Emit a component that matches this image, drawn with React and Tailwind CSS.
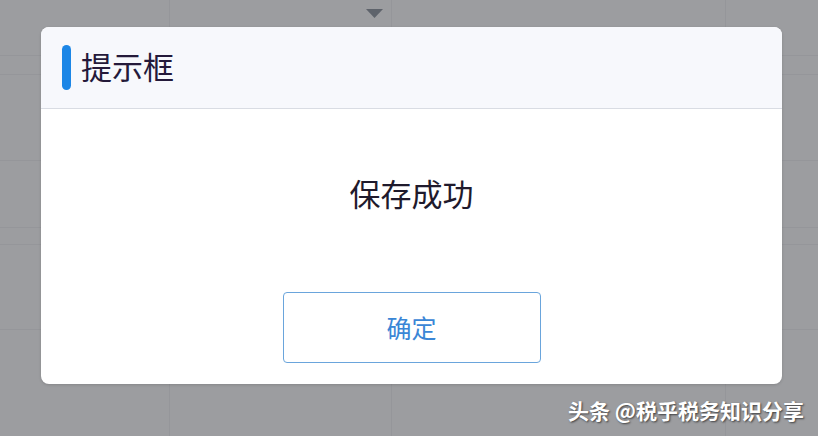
import React from "react";

const rows = [56, 19, 86, 67, 17, 85, 106];

function Backdrop() {
  return (
    <div className="flex flex-col w-full h-full">
      {rows.map((h, i) => (
        <div
          key={i}
          className="flex border-b border-[#95969a] last:border-b-0"
          style={{ height: h }}
        >
          <div className="w-[170px] border-r border-[#95969a]" />
          <div className="w-[222px] border-r border-[#95969a] flex justify-end items-start pr-[8px] pt-[9px]">
            {i === 0 && (
              <svg width="17" height="9" viewBox="0 0 17 9">
                <path d="M0 0 L17 0 L8.5 9 Z" fill="#5e636b" />
              </svg>
            )}
          </div>
          <div className="w-[334px] border-r border-[#95969a]" />
          <div className="flex-1" />
        </div>
      ))}
    </div>
  );
}

export default function App() {
  return (
    <div
      className="relative w-[818px] h-[436px] overflow-hidden bg-[#9c9da0]"
      style={{ fontFamily: '"Noto Sans CJK SC", "Noto Sans", sans-serif' }}
    >
      <Backdrop />

      <div className="absolute left-[41px] top-[27px] w-[741px] h-[357px] rounded-[8px] bg-white overflow-hidden flex flex-col shadow-[0_1px_3px_rgba(0,0,0,0.15)]">
        <div className="h-[82px] shrink-0 bg-[#f7f8fc] border-b border-[#d9dce3] flex items-center pl-[21px] gap-[10px]">
          <div className="w-[9px] h-[45px] rounded-full bg-[#1c86e6]" />
          <div className="text-[31px] leading-[40px] text-[#24193a] -mt-[4px]">提示框</div>
        </div>
        <div className="flex-1 flex flex-col items-center pt-[64px]">
          <div className="text-[31px] leading-[40px] text-[#1f1a2c]">保存成功</div>
          <button className="mt-[79px] w-[258px] h-[71px] rounded-[4px] border-[1.5px] border-[#6aa5dc] bg-white flex items-center justify-center text-[25px] text-[#3a86d6]">
            确定
          </button>
        </div>
      </div>

      <div className="absolute right-[14px] bottom-[12px] text-[21px] leading-[28px] font-bold text-white [text-shadow:1px_1px_2px_rgba(0,0,0,0.6)]">
        头条 @税乎税务知识分享
      </div>
    </div>
  );
}
